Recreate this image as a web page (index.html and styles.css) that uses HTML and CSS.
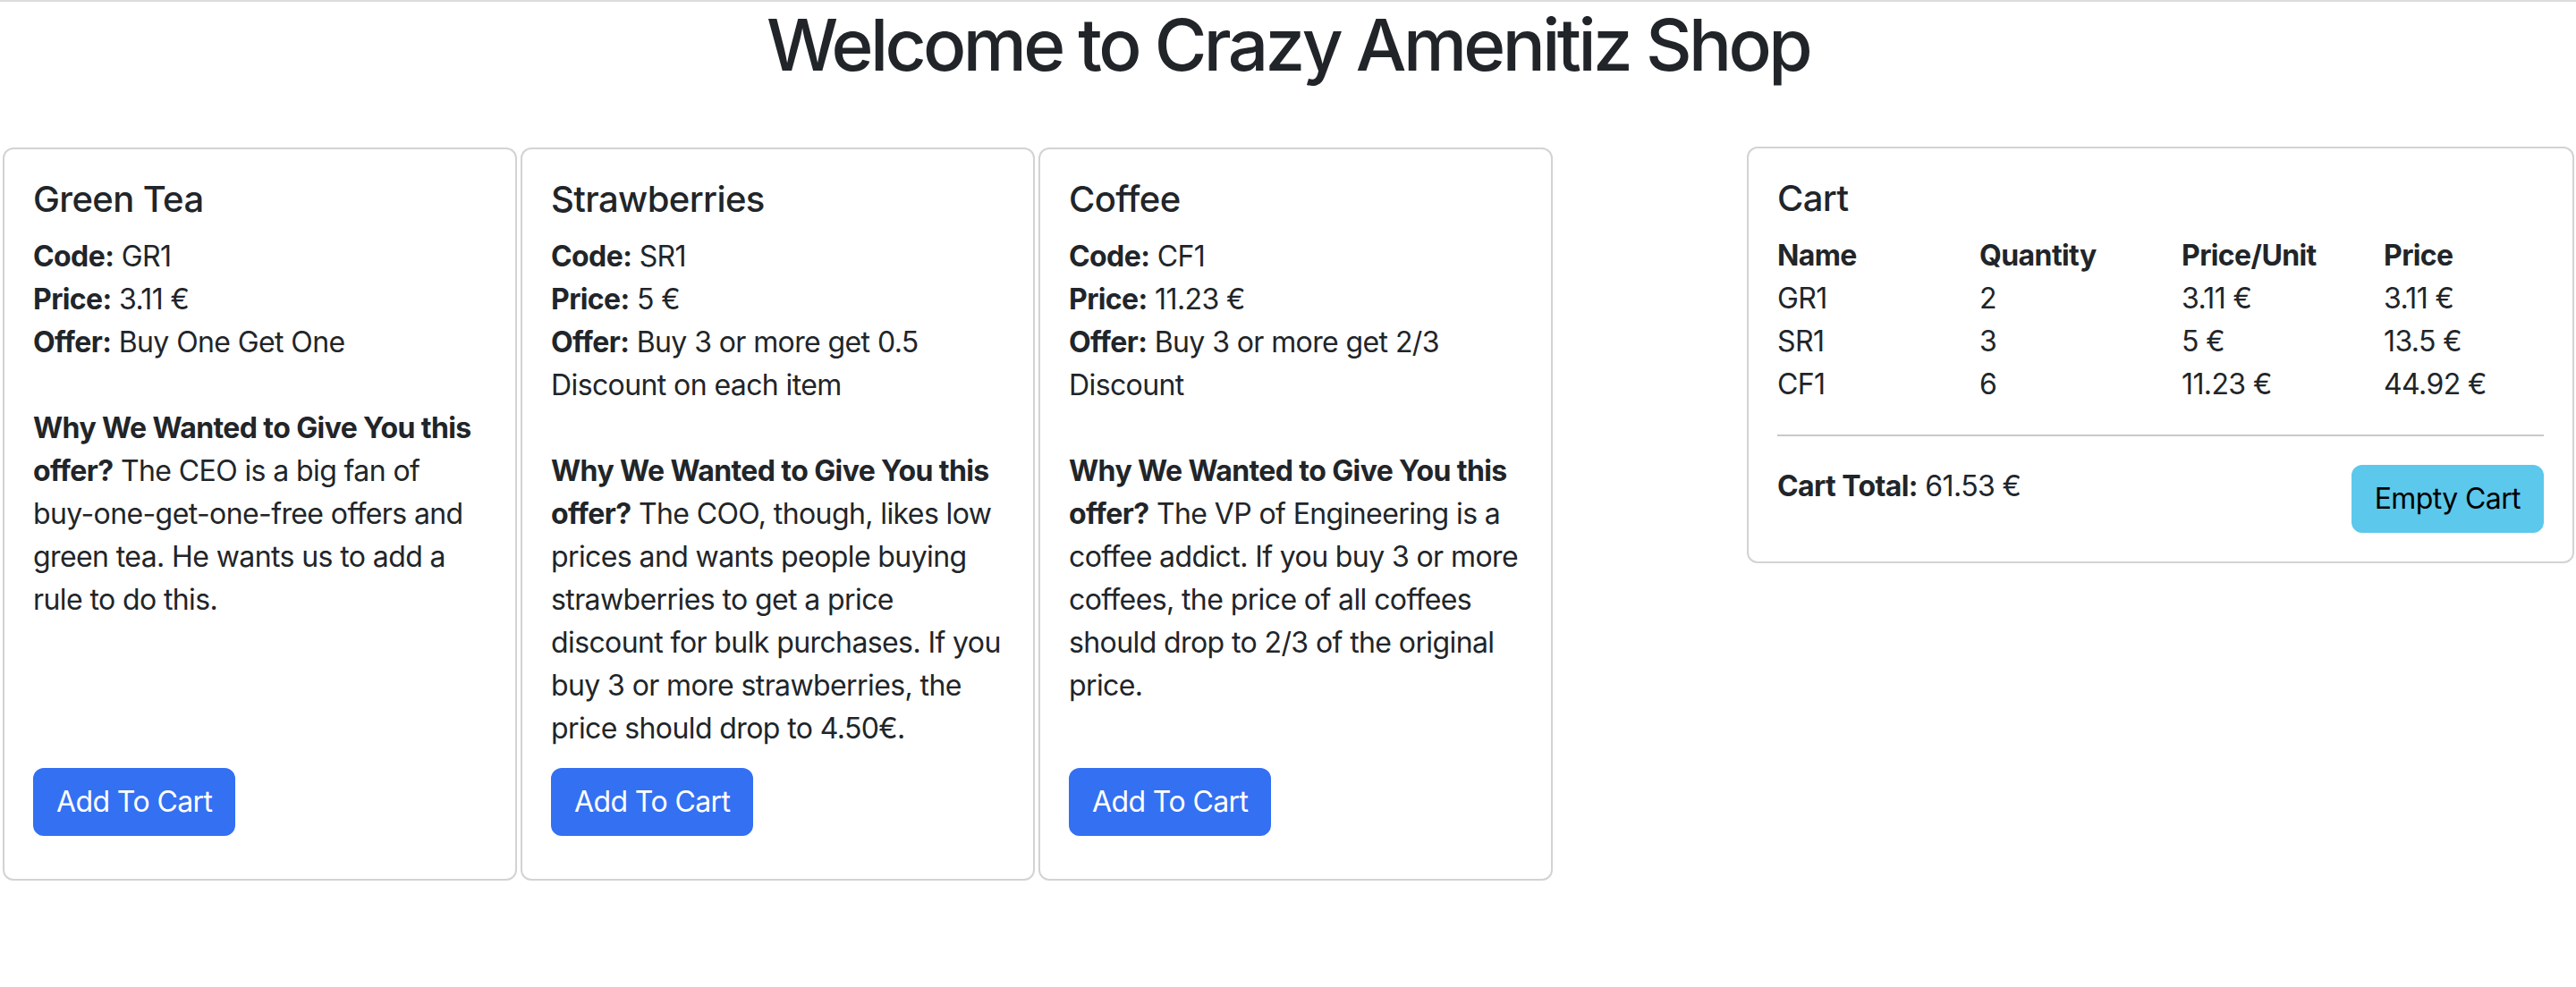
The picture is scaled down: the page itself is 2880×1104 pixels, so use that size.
FILE: index.html
```html
<!DOCTYPE html>
<html lang="en">
<head>
<meta charset="utf-8">
<title>Crazy Amenitiz Shop</title>
<link rel="stylesheet" href="styles.css">
</head>
<body>
<div class="topline"></div>
<h1 class="title">Welcome to Crazy Amenitiz Shop</h1>
<main class="shop">
  <section class="products">
    <article class="card">
      <h5 class="card-title">Green Tea</h5>
      <div class="card-text">
        <strong>Code:</strong> GR1<br>
        <strong>Price:</strong> 3.11 €<br>
        <strong>Offer:</strong> Buy One Get One<br><br>
        <strong>Why We Wanted to Give You this offer?</strong> The CEO is a big fan of buy-one-get-one-free offers and green tea. He wants us to add a rule to do this.
      </div>
      <button class="btn btn-primary">Add To Cart</button>
    </article>
    <article class="card">
      <h5 class="card-title">Strawberries</h5>
      <div class="card-text">
        <strong>Code:</strong> SR1<br>
        <strong>Price:</strong> 5 €<br>
        <strong>Offer:</strong> Buy 3 or more get 0.5 Discount on each item<br><br>
        <strong>Why We Wanted to Give You this offer?</strong> The COO, though, likes low prices and wants people buying strawberries to get a price discount for bulk purchases. If you buy 3 or more strawberries, the price should drop to 4.50€.
      </div>
      <button class="btn btn-primary">Add To Cart</button>
    </article>
    <article class="card">
      <h5 class="card-title">Coffee</h5>
      <div class="card-text">
        <strong>Code:</strong> CF1<br>
        <strong>Price:</strong> 11.23 €<br>
        <strong>Offer:</strong> Buy 3 or more get 2/3 Discount<br><br>
        <strong>Why We Wanted to Give You this offer?</strong> The VP of Engineering is a coffee addict. If you buy 3 or more coffees, the price of all coffees should drop to 2/3 of the original price.
      </div>
      <button class="btn btn-primary">Add To Cart</button>
    </article>
  </section>
  <aside class="card cart">
    <h5 class="card-title">Cart</h5>
    <table class="cart-table">
      <thead>
        <tr><th>Name</th><th>Quantity</th><th>Price/Unit</th><th>Price</th></tr>
      </thead>
      <tbody>
        <tr><td>GR1</td><td>2</td><td>3.11 €</td><td>3.11 €</td></tr>
        <tr><td>SR1</td><td>3</td><td>5 €</td><td>13.5 €</td></tr>
        <tr><td>CF1</td><td>6</td><td>11.23 €</td><td>44.92 €</td></tr>
      </tbody>
    </table>
    <hr class="divider">
    <div class="cart-footer">
      <div class="cart-total"><strong>Cart Total:</strong> 61.53 €</div>
      <button class="btn btn-info">Empty Cart</button>
    </div>
  </aside>
</main>
</body>
</html>
```
FILE: styles.css
```css
* { box-sizing: border-box; }

body {
  margin: 0;
  font-family: Inter, "Noto Sans", "Liberation Sans", sans-serif;
  font-size: 32px;
  line-height: 48px;
  letter-spacing: -0.6px;
  color: #212529;
  background: #fff;
}

.topline {
  height: 2px;
  background: #dcdcdc;
}

.title {
  margin: 0;
  font-size: 80px;
  line-height: 96px;
  font-weight: 500;
  letter-spacing: -3.6px;
  text-align: center;
}

.shop {
  display: flex;
  align-items: flex-start;
  margin-top: 67px;
  padding: 0 2px 0 3px;
}

.products {
  display: flex;
  gap: 4px;
  align-items: stretch;
}

.card {
  display: flex;
  flex-direction: column;
  align-items: flex-start;
  width: 575px;
  padding: 32px 32px 48px;
  border: 2px solid #d3d3d4;
  border-radius: 12px;
  background: #fff;
}

.card-title {
  margin: 0 0 16px;
  font-size: 40px;
  line-height: 48px;
  font-weight: 500;
  letter-spacing: -0.6px;
}

.card-text {
  margin-bottom: 20px;
}

.card-text strong, .cart-total strong {
  font-weight: 700;
}

.card .btn-primary {
  margin-top: auto;
}

.btn {
  font-family: inherit;
  font-size: 32px;
  line-height: 48px;
  letter-spacing: -0.6px;
  padding: 12px 24px;
  border: 2px solid transparent;
  border-radius: 12px;
  cursor: pointer;
}

.btn-primary {
  background: #3470f2;
  border-color: #3470f2;
  color: #fff;
}

.btn-info {
  background: #5cc8eb;
  border-color: #5cc8eb;
  color: #000;
}

.cart {
  width: 925px;
  margin-left: auto;
  margin-top: -1px;
  padding-bottom: 32px;
  align-items: stretch;
}

.cart-table {
  border-collapse: collapse;
  table-layout: fixed;
  width: 904px;
}

.cart-table th,
.cart-table td {
  width: 226px;
  padding: 0;
  text-align: left;
  font-weight: 400;
}

.cart-table th {
  font-weight: 700;
}

.divider {
  margin: 32px 0;
  border: 0;
  border-top: 2px solid #c8c9ca;
}

.cart-footer {
  display: flex;
  justify-content: space-between;
  align-items: flex-start;
}
```
